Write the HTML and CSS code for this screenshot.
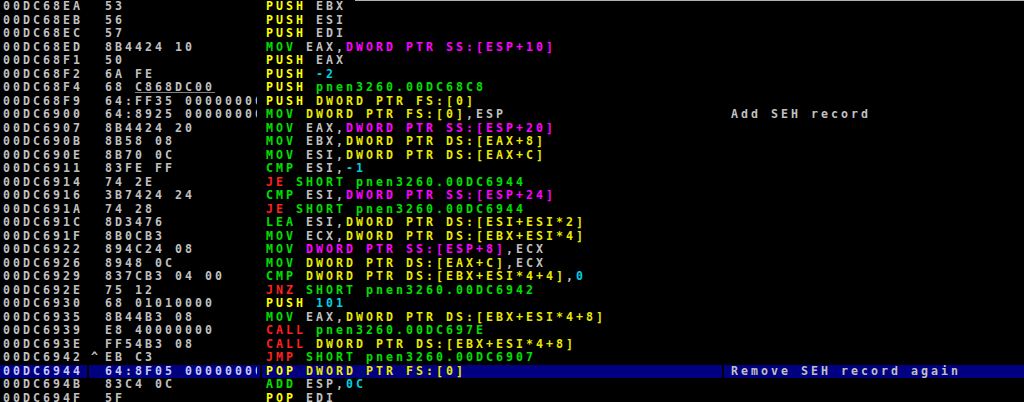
FILE: index.html
```html
<!DOCTYPE html>
<html lang="en">
<head>
    <meta charset="UTF-8">
    <meta name="viewport" content="width=device-width, initial-scale=1.0">
    <title>CPU - main thread</title>
    <link rel="stylesheet" href="styles.css">
</head>
<body>
    <div class="disasm">
        <div class="row"><div class="addr">00DC68EA</div><div class="hex"><span class="mark"></span><span class="bytes">53</span></div><div class="code"><span class="push">PUSH</span> <span class="reg">EBX</span></div><div class="note"></div></div>
        <div class="row"><div class="addr">00DC68EB</div><div class="hex"><span class="mark"></span><span class="bytes">56</span></div><div class="code"><span class="push">PUSH</span> <span class="reg">ESI</span></div><div class="note"></div></div>
        <div class="row"><div class="addr">00DC68EC</div><div class="hex"><span class="mark"></span><span class="bytes">57</span></div><div class="code"><span class="push">PUSH</span> <span class="reg">EDI</span></div><div class="note"></div></div>
        <div class="row"><div class="addr">00DC68ED</div><div class="hex"><span class="mark"></span><span class="bytes">8B4424 10</span></div><div class="code"><span class="cmd">MOV</span> <span class="reg">EAX,</span><span class="stack">DWORD PTR SS:[ESP+10]</span></div><div class="note"></div></div>
        <div class="row"><div class="addr">00DC68F1</div><div class="hex"><span class="mark"></span><span class="bytes">50</span></div><div class="code"><span class="push">PUSH</span> <span class="reg">EAX</span></div><div class="note"></div></div>
        <div class="row"><div class="addr">00DC68F2</div><div class="hex"><span class="mark"></span><span class="bytes">6A FE</span></div><div class="code"><span class="push">PUSH</span> <span class="num">-2</span></div><div class="note"></div></div>
        <div class="row"><div class="addr">00DC68F4</div><div class="hex"><span class="mark"></span><span class="bytes">68 <span class="fixup">C868DC00</span></span></div><div class="code"><span class="push">PUSH</span> <span class="sym">pnen3260.00DC68C8</span></div><div class="note"></div></div>
        <div class="row"><div class="addr">00DC68F9</div><div class="hex"><span class="mark"></span><span class="bytes">64:FF35 00000000</span></div><div class="code"><span class="push">PUSH</span> <span class="mem">DWORD PTR FS:[0]</span></div><div class="note"></div></div>
        <div class="row"><div class="addr">00DC6900</div><div class="hex"><span class="mark"></span><span class="bytes">64:8925 00000000</span></div><div class="code"><span class="cmd">MOV</span> <span class="mem">DWORD PTR FS:[0]</span><span class="reg">,ESP</span></div><div class="note">Add SEH record</div></div>
        <div class="row"><div class="addr">00DC6907</div><div class="hex"><span class="mark"></span><span class="bytes">8B4424 20</span></div><div class="code"><span class="cmd">MOV</span> <span class="reg">EAX,</span><span class="stack">DWORD PTR SS:[ESP+20]</span></div><div class="note"></div></div>
        <div class="row"><div class="addr">00DC690B</div><div class="hex"><span class="mark"></span><span class="bytes">8B58 08</span></div><div class="code"><span class="cmd">MOV</span> <span class="reg">EBX,</span><span class="mem">DWORD PTR DS:[EAX+8]</span></div><div class="note"></div></div>
        <div class="row"><div class="addr">00DC690E</div><div class="hex"><span class="mark"></span><span class="bytes">8B70 0C</span></div><div class="code"><span class="cmd">MOV</span> <span class="reg">ESI,</span><span class="mem">DWORD PTR DS:[EAX+C]</span></div><div class="note"></div></div>
        <div class="row"><div class="addr">00DC6911</div><div class="hex"><span class="mark"></span><span class="bytes">83FE FF</span></div><div class="code"><span class="cmd">CMP</span> <span class="reg">ESI,</span><span class="num">-1</span></div><div class="note"></div></div>
        <div class="row"><div class="addr">00DC6914</div><div class="hex"><span class="mark"></span><span class="bytes">74 2E</span></div><div class="code"><span class="jump">JE</span> <span class="sym">SHORT pnen3260.00DC6944</span></div><div class="note"></div></div>
        <div class="row"><div class="addr">00DC6916</div><div class="hex"><span class="mark"></span><span class="bytes">3B7424 24</span></div><div class="code"><span class="cmd">CMP</span> <span class="reg">ESI,</span><span class="stack">DWORD PTR SS:[ESP+24]</span></div><div class="note"></div></div>
        <div class="row"><div class="addr">00DC691A</div><div class="hex"><span class="mark"></span><span class="bytes">74 28</span></div><div class="code"><span class="jump">JE</span> <span class="sym">SHORT pnen3260.00DC6944</span></div><div class="note"></div></div>
        <div class="row"><div class="addr">00DC691C</div><div class="hex"><span class="mark"></span><span class="bytes">8D3476</span></div><div class="code"><span class="cmd">LEA</span> <span class="reg">ESI,</span><span class="mem">DWORD PTR DS:[ESI+ESI*2]</span></div><div class="note"></div></div>
        <div class="row"><div class="addr">00DC691F</div><div class="hex"><span class="mark"></span><span class="bytes">8B0CB3</span></div><div class="code"><span class="cmd">MOV</span> <span class="reg">ECX,</span><span class="mem">DWORD PTR DS:[EBX+ESI*4]</span></div><div class="note"></div></div>
        <div class="row"><div class="addr">00DC6922</div><div class="hex"><span class="mark"></span><span class="bytes">894C24 08</span></div><div class="code"><span class="cmd">MOV</span> <span class="stack">DWORD PTR SS:[ESP+8]</span><span class="reg">,ECX</span></div><div class="note"></div></div>
        <div class="row"><div class="addr">00DC6926</div><div class="hex"><span class="mark"></span><span class="bytes">8948 0C</span></div><div class="code"><span class="cmd">MOV</span> <span class="mem">DWORD PTR DS:[EAX+C]</span><span class="reg">,ECX</span></div><div class="note"></div></div>
        <div class="row"><div class="addr">00DC6929</div><div class="hex"><span class="mark"></span><span class="bytes">837CB3 04 00</span></div><div class="code"><span class="cmd">CMP</span> <span class="mem">DWORD PTR DS:[EBX+ESI*4+4]</span><span class="reg">,</span><span class="num">0</span></div><div class="note"></div></div>
        <div class="row"><div class="addr">00DC692E</div><div class="hex"><span class="mark"></span><span class="bytes">75 12</span></div><div class="code"><span class="jump">JNZ</span> <span class="sym">SHORT pnen3260.00DC6942</span></div><div class="note"></div></div>
        <div class="row"><div class="addr">00DC6930</div><div class="hex"><span class="mark"></span><span class="bytes">68 01010000</span></div><div class="code"><span class="push">PUSH</span> <span class="num">101</span></div><div class="note"></div></div>
        <div class="row"><div class="addr">00DC6935</div><div class="hex"><span class="mark"></span><span class="bytes">8B44B3 08</span></div><div class="code"><span class="cmd">MOV</span> <span class="reg">EAX,</span><span class="mem">DWORD PTR DS:[EBX+ESI*4+8]</span></div><div class="note"></div></div>
        <div class="row"><div class="addr">00DC6939</div><div class="hex"><span class="mark"></span><span class="bytes">E8 40000000</span></div><div class="code"><span class="jump">CALL</span> <span class="sym">pnen3260.00DC697E</span></div><div class="note"></div></div>
        <div class="row"><div class="addr">00DC693E</div><div class="hex"><span class="mark"></span><span class="bytes">FF54B3 08</span></div><div class="code"><span class="jump">CALL</span> <span class="mem">DWORD PTR DS:[EBX+ESI*4+8]</span></div><div class="note"></div></div>
        <div class="row"><div class="addr">00DC6942</div><div class="hex"><span class="mark">^</span><span class="bytes">EB C3</span></div><div class="code"><span class="jump">JMP</span> <span class="sym">SHORT pnen3260.00DC6907</span></div><div class="note"></div></div>
        <div class="row selected"><div class="addr">00DC6944</div><div class="hex"><span class="mark"></span><span class="bytes">64:8F05 00000000</span></div><div class="code"><span class="push">POP</span> <span class="mem">DWORD PTR FS:[0]</span></div><div class="note">Remove SEH record again</div></div>
        <div class="row"><div class="addr">00DC694B</div><div class="hex"><span class="mark"></span><span class="bytes">83C4 0C</span></div><div class="code"><span class="cmd">ADD</span> <span class="reg">ESP,</span><span class="num">0C</span></div><div class="note"></div></div>
        <div class="row"><div class="addr">00DC694F</div><div class="hex"><span class="mark"></span><span class="bytes">5F</span></div><div class="code"><span class="push">POP</span> <span class="reg">EDI</span></div><div class="note"></div></div>
    </div>
</body>
</html>
```

FILE: styles.css
```css
html, body {
    margin: 0;
    padding: 0;
    background-color: #000;
    overflow: hidden;
}
.disasm {
    position: relative;
    font-family: "DejaVu Sans Mono", monospace;
    font-size: 11.6px;
    font-weight: bold;
    letter-spacing: 3.02px;
    line-height: 13.5px;
    color: #c0c0c0;
}
/* window frame edge at the top of the pane */
.disasm::before {
    content: "";
    position: absolute;
    top: 0;
    left: 355px;
    right: 0;
    height: 1px;
    background-color: #b0b0b0;
}
.row {
    display: flex;
    gap: 2px;
    height: 13.5px;
    white-space: pre;
}
.addr {
    width: 84px;
    padding-left: 3px;
    overflow: hidden;
}
.hex {
    display: flex;
    width: 162px;
    padding-left: 6px;
    padding-right: 3px;
}
.mark {
    flex: none;
    width: 14px;
    margin-left: -4px;
}
.bytes {
    flex: 1;
    overflow: hidden;
}
.code {
    width: 456px;
    padding-left: 4px;
    overflow: hidden;
}
.note {
    flex: 1;
    padding-left: 7px;
    overflow: hidden;
}
.selected .addr,
.selected .hex,
.selected .code,
.selected .note {
    background-color: #000080;
}
.selected .addr,
.selected .hex {
    color: #c8c8ff;
}
.fixup {
    text-decoration: underline;
    text-decoration-color: #808080;
}
.push { color: #ffff00; }
.cmd { color: #00e000; }
.jump { color: #ff2020; }
.reg { color: #c0c0c0; }
.stack { color: #ff00ff; }
.mem { color: #e8e800; }
.num { color: #00d0e0; }
.sym { color: #00e000; }
```
